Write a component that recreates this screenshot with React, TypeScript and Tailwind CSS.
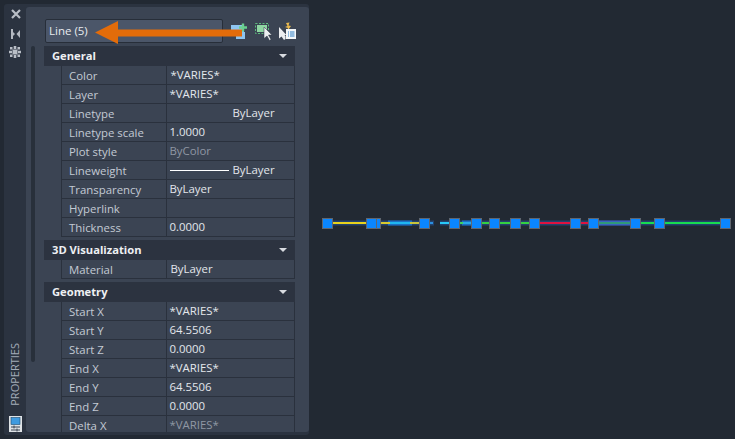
import React from "react";

const font = { fontFamily: '"Open Sans", "Noto Sans", sans-serif' };

function Row({ label, value, tone = "text-[#e3e7ec]", indent = "pl-[3px]", lineweight = false }: { label: string; value?: string; tone?: string; indent?: string; lineweight?: boolean }) {
  return (
    <div className="flex h-[19px] border-b border-[#2a313d] text-[11.4px] leading-[20px]">
      <div className="w-[104.5px] shrink-0 border-r border-[#2a313d] pl-[7px] text-[#c3cad3]">{label}</div>
      <div className={`flex flex-1 items-center leading-[18px] ${indent} ${tone}`}>
        {lineweight && <span className="mr-[4px] ml-[3px] h-px w-[59px] bg-white" />}
        {value}
      </div>
    </div>
  );
}

function Section({ title, children, className = "" }: { title: string; children: React.ReactNode; className?: string }) {
  return (
    <div className={className}>
      <div className="flex h-[20px] items-center justify-between bg-[#2c3340] pr-[8px] pl-[8px] text-[11.2px] font-bold text-[#eef0f3]">
        {title}
        <span className="h-0 w-0 border-x-[4px] border-t-[4px] border-x-transparent border-t-[#d8dbe0]" />
      </div>
      <div className="ml-[17px] border-x border-[#2a313d]">{children}</div>
    </div>
  );
}

const grips = [327.5, 375.5, 371.5, 424.5, 454.5, 476.5, 494.5, 515.5, 534.5, 575.5, 593.5, 635.5, 659.5, 725.5];

const segments: [number, number, string][] = [
  [333, 366, "#e8d21d"],
  [380, 390, "#d8c92e"],
  [390, 410, "#1fb6f0"],
  [410, 419, "#c9c53a"],
  [430, 433, "#2a8fe0"],
  [440, 449, "#28c8f8"],
  [460, 463, "#3fd060"],
  [463, 471, "#28a8e8"],
  [482, 489, "#35d040"],
  [500, 510, "#35d040"],
  [521, 529, "#35d040"],
  [540, 570, "#e0123f"],
  [581, 588, "#e0123f"],
  [599, 630, "#2f9a78"],
  [641, 654, "#18dc50"],
  [665, 720, "#18dc50"],
];

export default function App() {
  return (
    <div style={font} className="flex h-[439px] w-[735px] overflow-hidden bg-[#222933]">
      <div className="my-[4px] ml-[4px] flex w-[305px] shrink-0 rounded-[3px] bg-[#2b3340]">
        <div className="flex w-[22px] shrink-0 flex-col items-center pt-[5px]">
          <svg width="12" height="10" viewBox="0 0 12 10" className="mb-[9px] ml-[1px]">
            <path d="M2 1l8 8M10 1l-8 8" stroke="#b9bec6" strokeWidth="2.2" />
          </svg>
          <svg width="12" height="10" viewBox="0 0 12 10" className="mb-[7px] mt-[1px]">
            <path d="M2 0h2v10H2zM4 3l2 2-2 2zM11 1v8L7.5 5z" fill="#b4b9c1" />
          </svg>
          <svg width="12" height="12" viewBox="0 0 12 12">
            <path d="M1 1h2.5v2.5H1zM4.7 0h2.6v3H4.7zM8.5 1H11v2.5H8.5zM0 4.7h3v2.6H0zM9 4.7h3v2.6H9zM1 8.5h2.5V11H1zM4.7 9h2.6v3H4.7zM8.5 8.5H11V11H8.5zM3.5 3.5h5v5h-5z" fill="#b9bec6" />
          </svg>
          <div className="flex-1" />
          <div className="text-[11px] leading-[14px] text-[#a3acb8] [writing-mode:vertical-rl] rotate-180">PROPERTIES</div>
          <svg width="13" height="16" viewBox="0 0 13 16" className="mt-[10px] mb-[3px]">
            <rect width="13" height="16" fill="#dfe3e6" />
            <rect x="2" y="1.5" width="9" height="7" fill="#3f9be0" stroke="#1c4a6e" strokeWidth=".6" />
            <path d="M2 11h9M2 14h9M5 9.5v3M8 12.5v3" stroke="#3b4453" strokeWidth="1" />
          </svg>
        </div>

        <div className="mt-[3px] mb-[3px] flex min-w-0 flex-1 flex-col overflow-hidden rounded-[3px] bg-[#3b4453] pr-[14px]">
          <div className="flex h-[39px] shrink-0 items-start pt-[12px] pl-[19px]">
            <div className="flex h-[24px] w-[178px] shrink-0 items-center rounded-[2px] border border-[#272e39] bg-[#4b5669] pl-[3px] text-[11.5px] text-[#e8ebef]">Line (5)</div>
            <svg width="66" height="24" viewBox="0 0 66 24" className="ml-[8px] shrink-0">
              <rect x="0" y="6" width="13" height="9" fill="#8dc4f0" />
              <rect x="5" y="13" width="9" height="7" fill="#8dc4f0" />
              <path d="M12 4.5v8M8 8.5h8" stroke="#6ad08f" strokeWidth="2.4" />
              <rect x="24.5" y="4.5" width="13" height="10" fill="none" stroke="#5dbb7c" strokeDasharray="2 1.5" />
              <rect x="26" y="6" width="10" height="7" fill="#8fd6a2" />
              <path d="M33 8v11.5l3-2.5 2.5 4.5 1.5-1-2.5-4.5h3.5z" fill="#eceef0" stroke="#2b3340" strokeWidth=".5" />
              <path d="M48 8v11.5l2.5-2 2.5 3.5 1.5-1v-3l-1-1h2z" fill="#eceef0" />
              <path d="M55 4l1.5 3-2.5 1 3 1-1 3.5 4-5.5-2.5-.5 1-3z" fill="#e9b94e" />
              <rect x="55" y="10" width="10" height="10" fill="#f3f6f8" />
              <path d="M57 13h1M59 13h4.5M57 15h1M59 15h4.5M57 17h1M59 17h4.5" stroke="#2f7ec4" strokeWidth="1" />
            </svg>
          </div>
          <div className="flex min-h-0 flex-1">
            <div className="ml-[5px] h-[316px] w-[4px] shrink-0 rounded-[2px] bg-[#28303b]" />
            <div className="ml-[9px] min-w-0 flex-1 overflow-hidden">
              <Section title="General">
                <Row label="Color" value="*VARIES*" indent="pl-[4px]" />
                <Row label="Layer" value="*VARIES*" />
                <Row label="Linetype" value="ByLayer" indent="pl-[66px]" />
                <Row label="Linetype scale" value="1.0000" />
                <Row label="Plot style" value="ByColor" tone="text-[#8f97a3]" />
                <Row label="Lineweight" value="ByLayer" lineweight indent="pl-0" />
                <Row label="Transparency" value="ByLayer" />
                <Row label="Hyperlink" />
                <Row label="Thickness" value="0.0000" />
              </Section>
              <Section title="3D Visualization" className="mt-[3px]">
                <Row label="Material" value="ByLayer" indent="pl-[4px]" />
              </Section>
              <Section title="Geometry" className="mt-[3px]">
                <Row label="Start X" value="*VARIES*" />
                <Row label="Start Y" value="64.5506" />
                <Row label="Start Z" value="0.0000" />
                <Row label="End X" value="*VARIES*" />
                <Row label="End Y" value="64.5506" />
                <Row label="End Z" value="0.0000" />
                <Row label="Delta X" value="*VARIES*" tone="text-[#8f97a3]" />
              </Section>
            </div>
          </div>
        </div>

        <svg width="150" height="26" viewBox="0 0 150 26" className="absolute top-[20px] left-[94px]">
          <path d="M1 12.5L24 1v8.5h124v7H24V24z" fill="#e36c0a" />
        </svg>
      </div>

      <div className="flex min-w-0 flex-1 items-center">
        <svg width="426" height="24" viewBox="309 211 426 24" className="mt-[7px] shrink-0">
          <path d="M333 223H366M378 223H434M440 223H720" stroke="#23426f" strokeWidth="5" />
          <path d="M388 223H412M462 223H472" stroke="#1b6fc4" strokeWidth="5" />
          <path d="M595 223H632" stroke="#3a62c0" strokeWidth="5" />
          {segments.map(([a, b, c]) => (
            <path key={a} d={`M${a} 223H${b}`} stroke={c} strokeWidth="2" />
          ))}
          {grips.map((x) => (
            <rect key={x} x={x - 5} y={218.5} width={10} height={10} fill="#0a86ff" stroke="#5f6670" strokeWidth="1" />
          ))}
        </svg>
      </div>
    </div>
  );
}
